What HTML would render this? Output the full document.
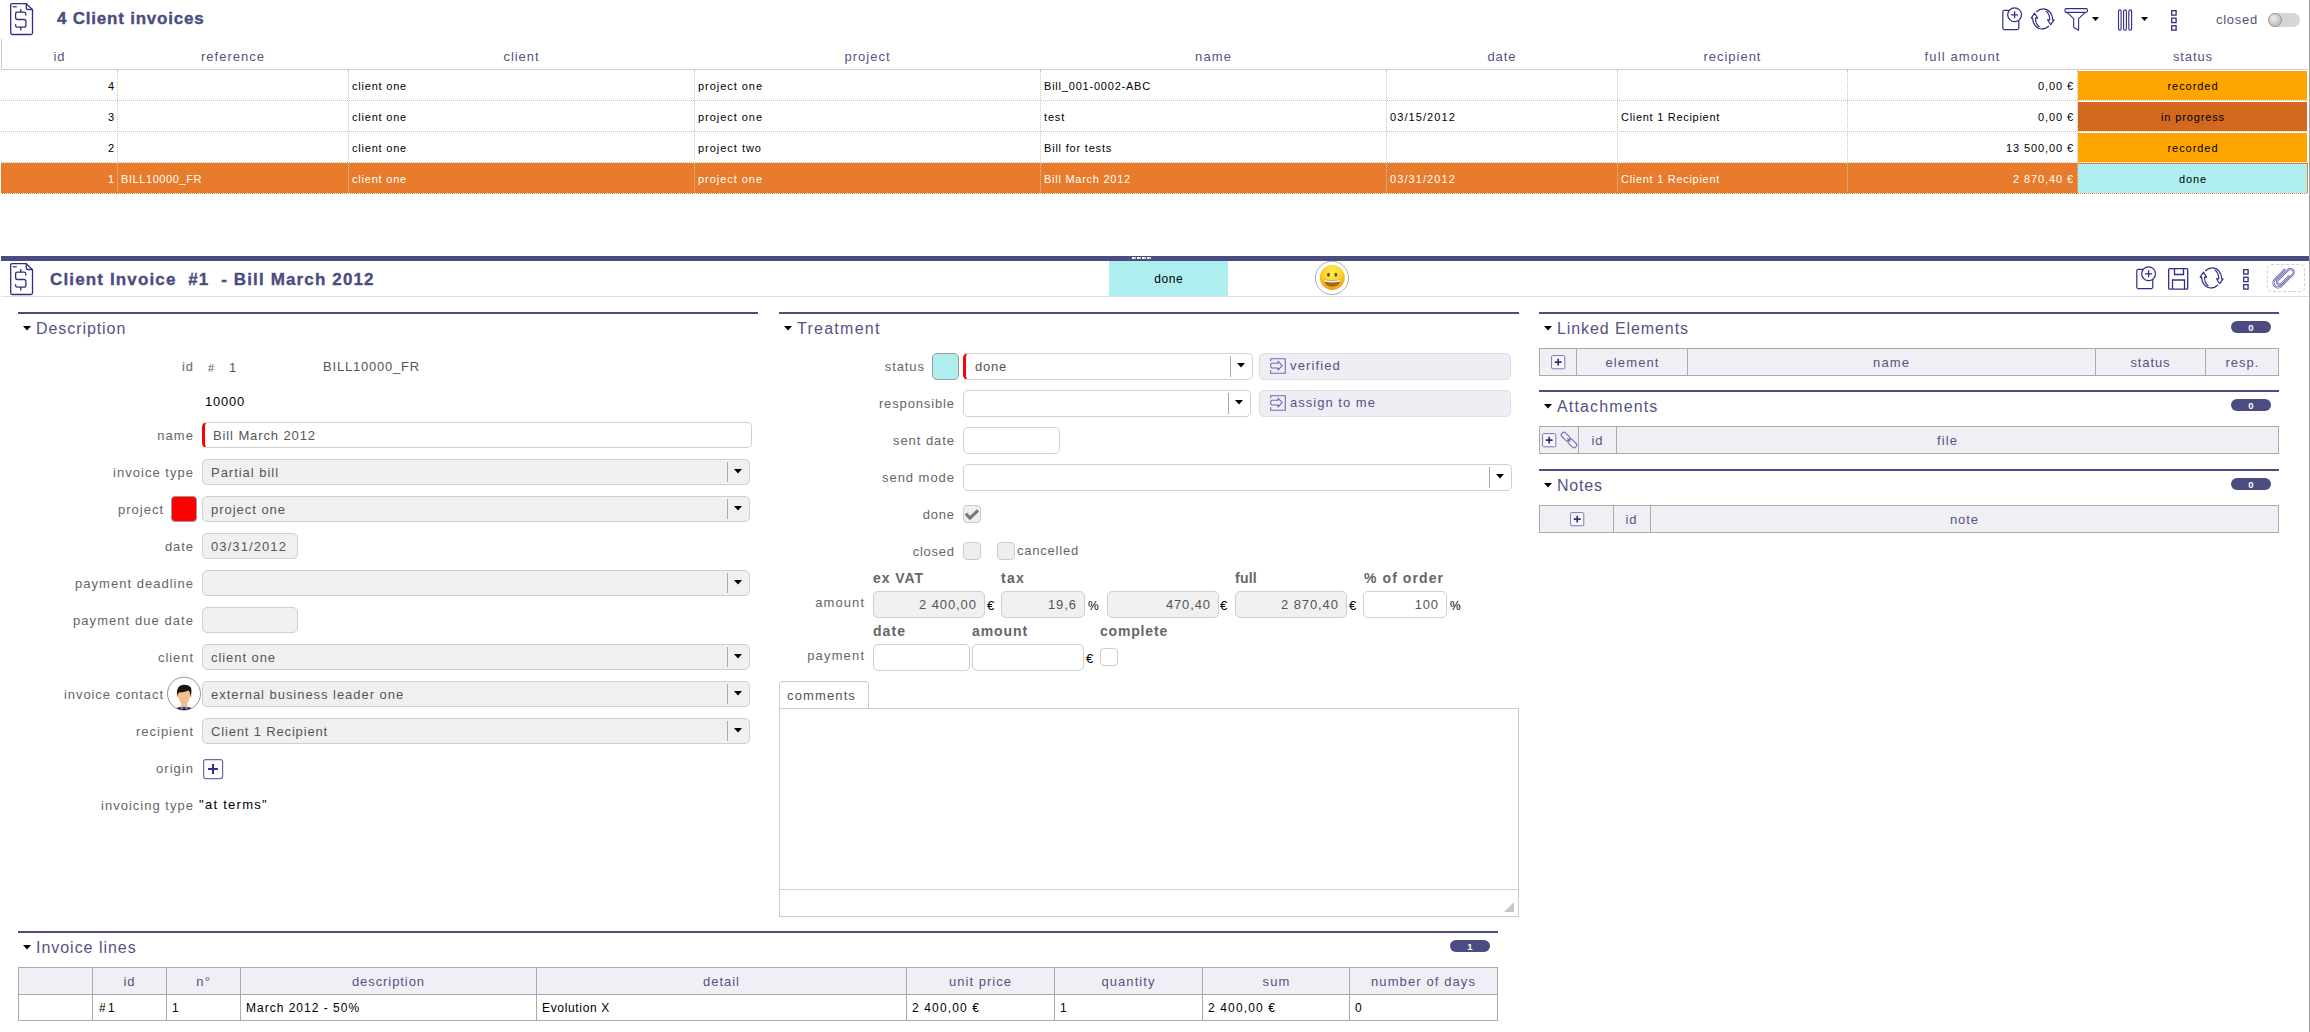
<!DOCTYPE html><html><head><meta charset="utf-8"><style>
html,body{margin:0;padding:0;background:#fff;width:2310px;height:1032px;overflow:hidden;position:relative;font-family:"Liberation Sans", sans-serif;}
.t{position:absolute;line-height:1;white-space:pre;}
.r{position:absolute;box-sizing:border-box;}
svg{position:absolute;overflow:visible;}
</style></head><body>
<svg style="left:10px;top:3px" width="24" height="33" viewBox="0 0 24 33">
<path d="M16.3 0.7 H2.2 Q0.7 0.7 0.7 2.2 V30 Q0.7 31.5 2.2 31.5 H21 Q22.5 31.5 22.5 30 V6.6 Z" fill="none" stroke="#2e2e86" stroke-width="1.3" stroke-linejoin="round"/>
<path d="M16.3 0.7 V5 Q16.3 6.5 17.8 6.5 H22.5" fill="none" stroke="#2e2e86" stroke-width="1.3"/>
<path d="M2.6 3.8 H6.8" stroke="#2e2e86" stroke-width="1.2"/>
<path d="M15.8 12.4 V11 Q15.8 9.2 14 9.2 H7.5 Q5.6 9.2 5.6 11 V14.6 Q5.6 16.5 7.5 16.5 H14 Q15.9 16.5 15.9 18.4 V22.2 Q15.9 24.1 14 24.1 H7.5 Q5.6 24.1 5.6 22.4 V21.3" fill="none" stroke="#2e2e86" stroke-width="1.3"/>
<path d="M10.8 5.9 V9.2 M10.8 24.1 V27.5" stroke="#2e2e86" stroke-width="1.3"/>
</svg>
<div class="t" style="top:9.6px;font-size:17px;color:#4b4c80;letter-spacing:0.78px;font-weight:700;left:57px;-webkit-text-stroke:0.35px #4b4c80;">4 Client invoices</div>
<svg style="left:2002px;top:7px" width="22" height="24" viewBox="0 0 22 24">
<path d="M7.6 3.3 H2.3 Q0.8 3.3 0.8 4.8 V21.1 Q0.8 22.6 2.3 22.6 H15.3 Q16.8 22.6 16.8 21.1 V13.3" fill="none" stroke="#2e2e86" stroke-width="1.2"/>
<circle cx="12.6" cy="7.8" r="6.9" fill="none" stroke="#2e2e86" stroke-width="1.2"/>
<path d="M12.6 4.3 V11.3 M9.1 7.8 H16.1" stroke="#2e2e86" stroke-width="1.3"/>
</svg>
<svg style="left:2026px;top:4px" width="33" height="31" viewBox="0 0 33 31">
<path d="M10.2 7.9 C12.7 5.7 14.7 4.9 17.2 4.9" fill="none" stroke="#2e2e86" stroke-width="1.3"/>
<path d="M17.2 4.9 C22.2 4.9 26.6 9.4 26.6 15.8 L28.1 15.8 L24.7 20.7 L21.5 15.8 L23.7 15.8 C23.7 11.4 22.2 8.4 19.7 6.9" fill="none" stroke="#2e2e86" stroke-width="1.15" stroke-linejoin="round"/>
<path d="M23 22 C20.5 24.2 18.5 25 16 25" fill="none" stroke="#2e2e86" stroke-width="1.3"/>
<path d="M16 25 C11 25 6.6 20.5 6.6 14.1 L5.1 14.1 L8.5 9.2 L11.7 14.1 L9.5 14.1 C9.5 18.5 11 21.5 13.5 23" fill="none" stroke="#2e2e86" stroke-width="1.15" stroke-linejoin="round"/>
</svg>
<svg style="left:2064px;top:8px" width="36" height="24" viewBox="0 0 36 24">
<path d="M2 0.6 H22 Q23.6 0.6 23.6 2.5 Q23.6 4.4 22 4.4 H2 Q1 4.4 1 3.4 V1.6 Q1 0.6 2 0.6 Z" fill="none" stroke="#2e2e86" stroke-width="1.1"/>
<path d="M3.3 4.6 L9.7 10.6 V19.6 L14.6 22.2 V10.6 L21.3 4.4" fill="none" stroke="#2e2e86" stroke-width="1.1" stroke-linejoin="round"/>
<path d="M28 9.1 H35 L31.5 12.9 Z" fill="#000"/>
</svg>
<svg style="left:2117px;top:9px" width="34" height="24" viewBox="0 0 34 24">
<rect x="1.5" y="0.9" width="2.6" height="20.2" rx="1.3" fill="none" stroke="#2e2e86" stroke-width="1.1"/>
<rect x="6.6" y="0.9" width="2.8" height="20.2" rx="1.4" fill="none" stroke="#2e2e86" stroke-width="1.1"/>
<rect x="11.8" y="0.9" width="2.8" height="20.2" rx="1.4" fill="none" stroke="#2e2e86" stroke-width="1.1"/>
<path d="M24 7.9 H31 L27.5 11.9 Z" fill="#000"/>
</svg>
<svg style="left:2171px;top:10px" width="8" height="22" viewBox="0 0 8 22">
<rect x="0.7" y="0.7" width="4.4" height="4.4" fill="none" stroke="#2e2e86" stroke-width="1.3"/>
<rect x="0.7" y="8.2" width="4.4" height="4.4" fill="none" stroke="#2e2e86" stroke-width="1.3"/>
<rect x="0.7" y="15.7" width="4.4" height="4.4" fill="none" stroke="#2e2e86" stroke-width="1.3"/>
</svg>
<div class="t" style="top:13.0px;font-size:13px;color:#545381;letter-spacing:0.74px;left:2216px;">closed</div>
<div class="r" style="left:2268px;top:13px;width:32px;height:14px;background:#d6d6d6;border-radius:7px;"></div>
<div class="r" style="left:2268px;top:13px;width:14px;height:14px;background:radial-gradient(circle at 40% 35%,#eee,#aaa);border-radius:7px;border:1px solid #999;"></div>
<div class="r" style="left:2309px;top:0px;width:1px;height:1032px;background:#a0a0a0;"></div>
<div class="r" style="left:1px;top:39px;width:1px;height:30px;background:#ccc;"></div>
<div class="r" style="left:1px;top:69px;width:2307px;height:1px;background:#cfcfcf;"></div>
<div class="t" style="top:50.0px;font-size:13px;color:#545381;letter-spacing:0.94px;left:1.47px;width:116px;text-align:center;">id</div>
<div class="t" style="top:50.0px;font-size:13px;color:#545381;letter-spacing:1.01px;left:117.50px;width:231px;text-align:center;">reference</div>
<div class="t" style="top:50.0px;font-size:13px;color:#545381;letter-spacing:0.94px;left:348.47px;width:346px;text-align:center;">client</div>
<div class="t" style="top:50.0px;font-size:13px;color:#545381;letter-spacing:1.00px;left:694.50px;width:346px;text-align:center;">project</div>
<div class="t" style="top:50.0px;font-size:13px;color:#545381;letter-spacing:1.12px;left:1040.56px;width:346px;text-align:center;">name</div>
<div class="t" style="top:50.0px;font-size:13px;color:#545381;letter-spacing:0.92px;left:1386.46px;width:231px;text-align:center;">date</div>
<div class="t" style="top:50.0px;font-size:13px;color:#545381;letter-spacing:0.98px;left:1617.49px;width:230px;text-align:center;">recipient</div>
<div class="t" style="top:50.0px;font-size:13px;color:#545381;letter-spacing:1.13px;left:1847.56px;width:230px;text-align:center;">full amount</div>
<div class="t" style="top:50.0px;font-size:13px;color:#545381;letter-spacing:0.89px;left:2077.44px;width:231px;text-align:center;">status</div>
<div class="r" style="left:1px;top:100px;width:2307px;height:1px;border-top:1px dotted #cdc6ad;"></div>
<div class="r" style="left:2078px;top:71px;width:229px;height:29px;background:#FFA500;"></div>
<div class="t" style="top:80.7px;font-size:11px;color:#000;letter-spacing:0.88px;right:2195.12px;">4</div>
<div class="t" style="top:80.7px;font-size:11px;color:#000;letter-spacing:0.79px;left:352px;">client one</div>
<div class="t" style="top:80.7px;font-size:11px;color:#000;letter-spacing:0.96px;left:698px;">project one</div>
<div class="t" style="top:80.7px;font-size:11px;color:#000;letter-spacing:0.79px;left:1044px;">Bill_001-0002-ABC</div>
<div class="t" style="top:80.7px;font-size:11px;color:#000;letter-spacing:0.90px;right:236.10px;">0,00 €</div>
<div class="t" style="top:80.7px;font-size:11px;color:#000;letter-spacing:0.95px;left:2078.97px;width:228px;text-align:center;">recorded</div>
<div class="r" style="left:1px;top:131px;width:2307px;height:1px;border-top:1px dotted #cdc6ad;"></div>
<div class="r" style="left:2078px;top:102px;width:229px;height:29px;background:#D2691E;"></div>
<div class="t" style="top:111.7px;font-size:11px;color:#000;letter-spacing:0.88px;right:2195.12px;">3</div>
<div class="t" style="top:111.7px;font-size:11px;color:#000;letter-spacing:0.79px;left:352px;">client one</div>
<div class="t" style="top:111.7px;font-size:11px;color:#000;letter-spacing:0.96px;left:698px;">project one</div>
<div class="t" style="top:111.7px;font-size:11px;color:#000;letter-spacing:0.82px;left:1044px;">test</div>
<div class="t" style="top:111.7px;font-size:11px;color:#000;letter-spacing:1.09px;left:1390px;">03/15/2012</div>
<div class="t" style="top:111.7px;font-size:11px;color:#000;letter-spacing:0.71px;left:1621px;">Client 1 Recipient</div>
<div class="t" style="top:111.7px;font-size:11px;color:#000;letter-spacing:0.90px;right:236.10px;">0,00 €</div>
<div class="t" style="top:111.7px;font-size:11px;color:#000;letter-spacing:0.87px;left:2078.94px;width:228px;text-align:center;">in progress</div>
<div class="r" style="left:1px;top:162px;width:2307px;height:1px;border-top:1px dotted #cdc6ad;"></div>
<div class="r" style="left:2078px;top:133px;width:229px;height:29px;background:#FFA500;"></div>
<div class="t" style="top:142.7px;font-size:11px;color:#000;letter-spacing:0.88px;right:2195.12px;">2</div>
<div class="t" style="top:142.7px;font-size:11px;color:#000;letter-spacing:0.79px;left:352px;">client one</div>
<div class="t" style="top:142.7px;font-size:11px;color:#000;letter-spacing:0.98px;left:698px;">project two</div>
<div class="t" style="top:142.7px;font-size:11px;color:#000;letter-spacing:0.80px;left:1044px;">Bill for tests</div>
<div class="t" style="top:142.7px;font-size:11px;color:#000;letter-spacing:0.90px;right:236.10px;">13 500,00 €</div>
<div class="t" style="top:142.7px;font-size:11px;color:#000;letter-spacing:0.95px;left:2078.97px;width:228px;text-align:center;">recorded</div>
<div class="r" style="left:1px;top:163px;width:2307px;height:31px;background:#E87B2C;"></div>
<div class="r" style="left:1px;top:193px;width:2307px;height:1px;border-top:1px dotted #fff;"></div>
<div class="r" style="left:2078px;top:164px;width:229px;height:29px;background:#AFEEEE;"></div>
<div class="t" style="top:173.7px;font-size:11px;color:#fff;letter-spacing:0.88px;right:2195.12px;">1</div>
<div class="t" style="top:173.7px;font-size:11px;color:#fff;letter-spacing:0.58px;left:121px;">BILL10000_FR</div>
<div class="t" style="top:173.7px;font-size:11px;color:#fff;letter-spacing:0.79px;left:352px;">client one</div>
<div class="t" style="top:173.7px;font-size:11px;color:#fff;letter-spacing:0.96px;left:698px;">project one</div>
<div class="t" style="top:173.7px;font-size:11px;color:#fff;letter-spacing:0.74px;left:1044px;">Bill March 2012</div>
<div class="t" style="top:173.7px;font-size:11px;color:#fff;letter-spacing:1.09px;left:1390px;">03/31/2012</div>
<div class="t" style="top:173.7px;font-size:11px;color:#fff;letter-spacing:0.71px;left:1621px;">Client 1 Recipient</div>
<div class="t" style="top:173.7px;font-size:11px;color:#fff;letter-spacing:0.90px;right:236.10px;">2 870,40 €</div>
<div class="t" style="top:173.7px;font-size:11px;color:#000;letter-spacing:0.88px;left:2078.94px;width:228px;text-align:center;">done</div>
<div class="r" style="left:117px;top:70px;width:1px;height:124px;border-left:1px dotted #cdc6ad;"></div>
<div class="r" style="left:348px;top:70px;width:1px;height:124px;border-left:1px dotted #cdc6ad;"></div>
<div class="r" style="left:694px;top:70px;width:1px;height:124px;border-left:1px dotted #cdc6ad;"></div>
<div class="r" style="left:1040px;top:70px;width:1px;height:124px;border-left:1px dotted #cdc6ad;"></div>
<div class="r" style="left:1386px;top:70px;width:1px;height:124px;border-left:1px dotted #cdc6ad;"></div>
<div class="r" style="left:1617px;top:70px;width:1px;height:124px;border-left:1px dotted #cdc6ad;"></div>
<div class="r" style="left:1847px;top:70px;width:1px;height:124px;border-left:1px dotted #cdc6ad;"></div>
<div class="r" style="left:2077px;top:70px;width:1px;height:124px;border-left:1px dotted #cdc6ad;"></div>
<div class="r" style="left:1px;top:256px;width:2308px;height:5px;background:#4b4c80;"></div>
<div class="r" style="left:1132px;top:257px;width:2px;height:2px;background:#fff;"></div>
<div class="r" style="left:1134px;top:257px;width:2px;height:2px;background:#cfcfc4;"></div>
<div class="r" style="left:1137px;top:257px;width:2px;height:2px;background:#fff;"></div>
<div class="r" style="left:1139px;top:257px;width:2px;height:2px;background:#cfcfc4;"></div>
<div class="r" style="left:1142px;top:257px;width:2px;height:2px;background:#fff;"></div>
<div class="r" style="left:1144px;top:257px;width:2px;height:2px;background:#cfcfc4;"></div>
<div class="r" style="left:1147px;top:257px;width:2px;height:2px;background:#fff;"></div>
<div class="r" style="left:1149px;top:257px;width:2px;height:2px;background:#cfcfc4;"></div>
<svg style="left:10px;top:263px" width="24" height="33" viewBox="0 0 24 33">
<path d="M16.3 0.7 H2.2 Q0.7 0.7 0.7 2.2 V30 Q0.7 31.5 2.2 31.5 H21 Q22.5 31.5 22.5 30 V6.6 Z" fill="none" stroke="#2e2e86" stroke-width="1.3" stroke-linejoin="round"/>
<path d="M16.3 0.7 V5 Q16.3 6.5 17.8 6.5 H22.5" fill="none" stroke="#2e2e86" stroke-width="1.3"/>
<path d="M2.6 3.8 H6.8" stroke="#2e2e86" stroke-width="1.2"/>
<path d="M15.8 12.4 V11 Q15.8 9.2 14 9.2 H7.5 Q5.6 9.2 5.6 11 V14.6 Q5.6 16.5 7.5 16.5 H14 Q15.9 16.5 15.9 18.4 V22.2 Q15.9 24.1 14 24.1 H7.5 Q5.6 24.1 5.6 22.4 V21.3" fill="none" stroke="#2e2e86" stroke-width="1.3"/>
<path d="M10.8 5.9 V9.2 M10.8 24.1 V27.5" stroke="#2e2e86" stroke-width="1.3"/>
</svg>
<div class="t" style="top:270.6px;font-size:17px;color:#4b4c80;letter-spacing:1.14px;font-weight:700;left:50px;-webkit-text-stroke:0.35px #4b4c80;">Client Invoice  #1  - Bill March 2012</div>
<div class="r" style="left:1109px;top:261px;width:119px;height:35px;background:#AFEEEE;"></div>
<div class="t" style="top:272.8px;font-size:12px;color:#000;letter-spacing:0.57px;left:1109.29px;width:119px;text-align:center;">done</div>
<svg style="left:1310px;top:258px" width="44" height="40" viewBox="0 0 44 40">
<circle cx="22" cy="19.9" r="16.6" fill="#fff" stroke="#aaa" stroke-width="1"/>
<defs><radialGradient id="eg" cx="50%" cy="30%" r="70%"><stop offset="0" stop-color="#fff35a"/><stop offset="0.55" stop-color="#fcd22a"/><stop offset="1" stop-color="#f39a0c"/></radialGradient></defs>
<circle cx="22.3" cy="19.5" r="12.5" fill="url(#eg)"/>
<ellipse cx="18.5" cy="16.7" rx="1.5" ry="2" fill="#7a4a10"/>
<ellipse cx="25.9" cy="16.7" rx="1.5" ry="2" fill="#7a4a10"/>
<path d="M14 21.5 Q22.3 23.3 30.8 21.5 Q29.8 28.8 22.3 28.8 Q15 28.8 14 21.5 Z" fill="#a8650e"/>
<path d="M14.3 21.8 Q22.3 23.6 30.5 21.8 L30.1 23.8 Q22.3 25.3 14.7 23.8 Z" fill="#eef2f4"/>
</svg>
<svg style="left:2136px;top:266px" width="22" height="24" viewBox="0 0 22 24">
<path d="M7.6 3.3 H2.3 Q0.8 3.3 0.8 4.8 V21.1 Q0.8 22.6 2.3 22.6 H15.3 Q16.8 22.6 16.8 21.1 V13.3" fill="none" stroke="#2e2e86" stroke-width="1.2"/>
<circle cx="12.6" cy="7.8" r="6.9" fill="none" stroke="#2e2e86" stroke-width="1.2"/>
<path d="M12.6 4.3 V11.3 M9.1 7.8 H16.1" stroke="#2e2e86" stroke-width="1.3"/>
</svg>
<svg style="left:2168px;top:268px" width="21" height="22" viewBox="0 0 21 22">
<rect x="0.7" y="0.7" width="19" height="20.5" rx="1" fill="none" stroke="#2e2e86" stroke-width="1.3"/>
<path d="M6.5 0.7 V6.5 H15.5 V0.7" fill="none" stroke="#2e2e86" stroke-width="1.3"/>
<path d="M4.5 21 V12 H16.5 V21" fill="none" stroke="#2e2e86" stroke-width="1.3"/>
</svg>
<svg style="left:2195px;top:263px" width="33" height="31" viewBox="0 0 33 31">
<path d="M10.2 7.9 C12.7 5.7 14.7 4.9 17.2 4.9" fill="none" stroke="#2e2e86" stroke-width="1.3"/>
<path d="M17.2 4.9 C22.2 4.9 26.6 9.4 26.6 15.8 L28.1 15.8 L24.7 20.7 L21.5 15.8 L23.7 15.8 C23.7 11.4 22.2 8.4 19.7 6.9" fill="none" stroke="#2e2e86" stroke-width="1.15" stroke-linejoin="round"/>
<path d="M23 22 C20.5 24.2 18.5 25 16 25" fill="none" stroke="#2e2e86" stroke-width="1.3"/>
<path d="M16 25 C11 25 6.6 20.5 6.6 14.1 L5.1 14.1 L8.5 9.2 L11.7 14.1 L9.5 14.1 C9.5 18.5 11 21.5 13.5 23" fill="none" stroke="#2e2e86" stroke-width="1.15" stroke-linejoin="round"/>
</svg>
<svg style="left:2243px;top:269px" width="8" height="22" viewBox="0 0 8 22">
<rect x="0.7" y="0.7" width="4.4" height="4.4" fill="none" stroke="#2e2e86" stroke-width="1.3"/>
<rect x="0.7" y="8.2" width="4.4" height="4.4" fill="none" stroke="#2e2e86" stroke-width="1.3"/>
<rect x="0.7" y="15.7" width="4.4" height="4.4" fill="none" stroke="#2e2e86" stroke-width="1.3"/>
</svg>
<svg style="left:2265px;top:262px" width="42" height="32" viewBox="0 0 42 32">
<rect x="2.3" y="2.5" width="37.2" height="27" rx="4" fill="none" stroke="#cfcfcf" stroke-width="1" stroke-dasharray="3 2"/>
<path d="M20.15 7.28 L9.69 17.75 A4.55 4.55 0 0 0 16.12 24.18 L27.75 12.55 A3.3 3.3 0 0 0 23.09 7.89 L12.69 18.29 A2.55 2.55 0 0 0 16.29 21.89 L24.54 13.65" fill="none" stroke="#5c5ca8" stroke-width="2.1"/>
<path d="M20.15 7.28 L9.69 17.75 A4.55 4.55 0 0 0 16.12 24.18 L27.75 12.55 A3.3 3.3 0 0 0 23.09 7.89 L12.69 18.29 A2.55 2.55 0 0 0 16.29 21.89 L24.54 13.65" fill="none" stroke="#fff" stroke-width="0.7"/>
</svg>
<div class="r" style="left:1px;top:296px;width:2308px;height:1px;background:#dcdcec;"></div>
<div class="r" style="left:18px;top:312px;width:740px;height:2px;background:#4b4c80;"></div>
<svg style="left:23px;top:326px" width="8" height="5" viewBox="0 0 8 5"><path d="M0 0 H8 L4 4.5 Z" fill="#000"/></svg>
<div class="t" style="top:320.5px;font-size:16px;color:#545381;letter-spacing:0.93px;left:36px;">Description</div>
<div class="r" style="left:779px;top:312px;width:740px;height:2px;background:#4b4c80;"></div>
<svg style="left:784px;top:326px" width="8" height="5" viewBox="0 0 8 5"><path d="M0 0 H8 L4 4.5 Z" fill="#000"/></svg>
<div class="t" style="top:320.5px;font-size:16px;color:#545381;letter-spacing:1.26px;left:797px;">Treatment</div>
<div class="r" style="left:1539px;top:312px;width:740px;height:2px;background:#4b4c80;"></div>
<svg style="left:1544px;top:326px" width="8" height="5" viewBox="0 0 8 5"><path d="M0 0 H8 L4 4.5 Z" fill="#000"/></svg>
<div class="t" style="top:320.5px;font-size:16px;color:#545381;letter-spacing:0.91px;left:1557px;">Linked Elements</div>
<div class="r" style="left:2231px;top:321px;width:40px;height:12px;background:#4b4c80;border-radius:6px;"></div>
<div class="t" style="top:322.5px;font-size:9.5px;color:#fff;letter-spacing:0.00px;font-weight:700;left:2231.00px;width:40px;text-align:center;">0</div>
<div class="r" style="left:1539px;top:390px;width:740px;height:2px;background:#4b4c80;"></div>
<svg style="left:1544px;top:404px" width="8" height="5" viewBox="0 0 8 5"><path d="M0 0 H8 L4 4.5 Z" fill="#000"/></svg>
<div class="t" style="top:398.5px;font-size:16px;color:#545381;letter-spacing:1.14px;left:1557px;">Attachments</div>
<div class="r" style="left:2231px;top:399px;width:40px;height:12px;background:#4b4c80;border-radius:6px;"></div>
<div class="t" style="top:400.5px;font-size:9.5px;color:#fff;letter-spacing:0.00px;font-weight:700;left:2231.00px;width:40px;text-align:center;">0</div>
<div class="r" style="left:1539px;top:469px;width:740px;height:2px;background:#4b4c80;"></div>
<svg style="left:1544px;top:483px" width="8" height="5" viewBox="0 0 8 5"><path d="M0 0 H8 L4 4.5 Z" fill="#000"/></svg>
<div class="t" style="top:477.5px;font-size:16px;color:#545381;letter-spacing:0.81px;left:1557px;">Notes</div>
<div class="r" style="left:2231px;top:478px;width:40px;height:12px;background:#4b4c80;border-radius:6px;"></div>
<div class="t" style="top:479.5px;font-size:9.5px;color:#fff;letter-spacing:0.00px;font-weight:700;left:2231.00px;width:40px;text-align:center;">0</div>
<div class="r" style="left:18px;top:931px;width:1480px;height:2px;background:#4b4c80;"></div>
<svg style="left:23px;top:945px" width="8" height="5" viewBox="0 0 8 5"><path d="M0 0 H8 L4 4.5 Z" fill="#000"/></svg>
<div class="t" style="top:939.5px;font-size:16px;color:#545381;letter-spacing:0.97px;left:36px;">Invoice lines</div>
<div class="r" style="left:1450px;top:940px;width:40px;height:12px;background:#4b4c80;border-radius:6px;"></div>
<div class="t" style="top:941.5px;font-size:9.5px;color:#fff;letter-spacing:0.00px;font-weight:700;left:1450.00px;width:40px;text-align:center;">1</div>
<div class="t" style="top:360.0px;font-size:13px;color:#666666;letter-spacing:0.94px;right:2116.06px;">id</div>
<div class="t" style="top:362.7px;font-size:11px;color:#555;letter-spacing:0.00px;left:208px;">#</div>
<div class="t" style="top:361.0px;font-size:13px;color:#555;letter-spacing:0.77px;left:229px;">1</div>
<div class="t" style="top:360.0px;font-size:13px;color:#555;letter-spacing:0.80px;left:323px;">BILL10000_FR</div>
<div class="t" style="top:395.0px;font-size:13px;color:#000;letter-spacing:0.77px;left:205px;">10000</div>
<div class="t" style="top:429.0px;font-size:13px;color:#666666;letter-spacing:1.12px;right:2115.88px;">name</div>
<div class="r" style="left:202px;top:422px;width:550px;height:26px;background:#fff;border:1px solid #cfcfcf;border-radius:5px;border-left:3px solid #f00;"></div>
<div class="t" style="top:429.0px;font-size:13px;color:#555;letter-spacing:0.89px;left:213px;">Bill March 2012</div>
<div class="t" style="top:466.0px;font-size:13px;color:#666666;letter-spacing:1.03px;right:2115.97px;">invoice type</div>
<div class="r" style="left:202px;top:459px;width:548px;height:26px;background:#f0f0f0;border:1px solid #cfcfcf;border-radius:5px;"></div>
<div class="t" style="top:466.0px;font-size:13px;color:#555;letter-spacing:0.97px;left:211px;">Partial bill</div>
<div class="r" style="left:727px;top:462px;width:1px;height:20px;background:#aaa;"></div>
<svg style="left:734px;top:469px" width="8" height="5" viewBox="0 0 8 5"><path d="M0 0 H8 L4 4.5 Z" fill="#000"/></svg>
<div class="t" style="top:503.0px;font-size:13px;color:#666666;letter-spacing:1.00px;right:2146.00px;">project</div>
<div class="r" style="left:171px;top:496px;width:26px;height:26px;background:#f00;border:1px solid #999;border-radius:4px;"></div>
<div class="r" style="left:202px;top:496px;width:548px;height:26px;background:#f0f0f0;border:1px solid #cfcfcf;border-radius:5px;"></div>
<div class="t" style="top:503.0px;font-size:13px;color:#555;letter-spacing:0.97px;left:211px;">project one</div>
<div class="r" style="left:727px;top:499px;width:1px;height:20px;background:#aaa;"></div>
<svg style="left:734px;top:506px" width="8" height="5" viewBox="0 0 8 5"><path d="M0 0 H8 L4 4.5 Z" fill="#000"/></svg>
<div class="t" style="top:540.0px;font-size:13px;color:#666666;letter-spacing:0.92px;right:2116.08px;">date</div>
<div class="r" style="left:202px;top:533px;width:96px;height:26px;background:#f0f0f0;border:1px solid #cfcfcf;border-radius:5px;"></div>
<div class="t" style="top:540.0px;font-size:13px;color:#555;letter-spacing:1.09px;left:211px;">03/31/2012</div>
<div class="t" style="top:577.0px;font-size:13px;color:#666666;letter-spacing:1.02px;right:2115.98px;">payment deadline</div>
<div class="r" style="left:202px;top:570px;width:548px;height:26px;background:#f0f0f0;border:1px solid #cfcfcf;border-radius:5px;"></div>
<div class="r" style="left:727px;top:573px;width:1px;height:20px;background:#aaa;"></div>
<svg style="left:734px;top:580px" width="8" height="5" viewBox="0 0 8 5"><path d="M0 0 H8 L4 4.5 Z" fill="#000"/></svg>
<div class="t" style="top:614.0px;font-size:13px;color:#666666;letter-spacing:1.06px;right:2115.94px;">payment due date</div>
<div class="r" style="left:202px;top:607px;width:96px;height:26px;background:#f0f0f0;border:1px solid #cfcfcf;border-radius:5px;"></div>
<div class="t" style="top:651.0px;font-size:13px;color:#666666;letter-spacing:0.94px;right:2116.06px;">client</div>
<div class="r" style="left:202px;top:644px;width:548px;height:26px;background:#f0f0f0;border:1px solid #cfcfcf;border-radius:5px;"></div>
<div class="t" style="top:651.0px;font-size:13px;color:#555;letter-spacing:0.93px;left:211px;">client one</div>
<div class="r" style="left:727px;top:647px;width:1px;height:20px;background:#aaa;"></div>
<svg style="left:734px;top:654px" width="8" height="5" viewBox="0 0 8 5"><path d="M0 0 H8 L4 4.5 Z" fill="#000"/></svg>
<div class="t" style="top:688.0px;font-size:13px;color:#666666;letter-spacing:0.93px;right:2146.07px;">invoice contact</div>
<svg style="left:167px;top:677px" width="34" height="34" viewBox="0 0 34 34">
<defs><clipPath id="avc"><circle cx="17" cy="16.7" r="16.2"/></clipPath></defs>
<circle cx="17" cy="16.7" r="16.5" fill="#fff" stroke="#888" stroke-width="0.9"/>
<g clip-path="url(#avc)">
<path d="M6 34 Q7 30.5 17 29.5 Q27 30.5 28 34 Z" fill="#3a1030"/>
<rect x="14.2" y="26" width="6" height="4" fill="#efb98a"/>
<path d="M13.8 29.6 L17.2 31 L20.6 29.6 L20.6 32.4 L17.2 31 L13.8 32.4 Z" fill="#5ab4ea"/>
<ellipse cx="10.6" cy="18.8" rx="1.2" ry="1.8" fill="#f2be90"/>
<ellipse cx="23.6" cy="18.8" rx="1.2" ry="1.8" fill="#f2be90"/>
<path d="M10.9 13 Q10.9 27 17.1 28.5 Q23.3 27 23.3 13 Z" fill="#f2be90"/>
<path d="M10 19 Q9.5 11 12.5 9.2 Q15 7.6 18 7.8 Q24 8.2 24.5 13 Q24.6 16 23.5 19.5 Q23 14.5 21.5 13.5 Q17 15.5 12 15.5 Q11 16.5 10 19 Z" fill="#1e140c"/>
</g>
</svg>
<div class="r" style="left:202px;top:681px;width:548px;height:26px;background:#f0f0f0;border:1px solid #cfcfcf;border-radius:5px;"></div>
<div class="t" style="top:688.0px;font-size:13px;color:#555;letter-spacing:0.96px;left:211px;">external business leader one</div>
<div class="r" style="left:727px;top:684px;width:1px;height:20px;background:#aaa;"></div>
<svg style="left:734px;top:691px" width="8" height="5" viewBox="0 0 8 5"><path d="M0 0 H8 L4 4.5 Z" fill="#000"/></svg>
<div class="t" style="top:725.0px;font-size:13px;color:#666666;letter-spacing:0.98px;right:2116.02px;">recipient</div>
<div class="r" style="left:202px;top:718px;width:548px;height:26px;background:#f0f0f0;border:1px solid #cfcfcf;border-radius:5px;"></div>
<div class="t" style="top:725.0px;font-size:13px;color:#555;letter-spacing:0.84px;left:211px;">Client 1 Recipient</div>
<div class="r" style="left:727px;top:721px;width:1px;height:20px;background:#aaa;"></div>
<svg style="left:734px;top:728px" width="8" height="5" viewBox="0 0 8 5"><path d="M0 0 H8 L4 4.5 Z" fill="#000"/></svg>
<div class="t" style="top:762.0px;font-size:13px;color:#666666;letter-spacing:1.03px;right:2115.97px;">origin</div>
<svg style="left:203px;top:759px" width="21" height="21" viewBox="0 0 21 21">
<rect x="0.6" y="0.6" width="19" height="19" rx="2" fill="#fff" stroke="#6a6aa8" stroke-width="1.2"/>
<path d="M10 5.1 V14.9 M5.1 10 H14.9" stroke="#2e2e86" stroke-width="2"/>
</svg>
<div class="t" style="top:799.0px;font-size:13px;color:#666666;letter-spacing:1.02px;right:2115.98px;">invoicing type</div>
<div class="t" style="top:798.0px;font-size:13px;color:#000;letter-spacing:1.28px;left:199px;">"at terms"</div>
<div class="t" style="top:360.0px;font-size:13px;color:#666666;letter-spacing:0.89px;right:1385.11px;">status</div>
<div class="r" style="left:932px;top:353px;width:27px;height:27px;background:#AFEEEE;border:1px solid #999;border-radius:5px;"></div>
<div class="r" style="left:963px;top:353px;width:290px;height:27px;background:#fff;border:1px solid #cfcfcf;border-radius:5px;border-left:3px solid #f00;"></div>
<div class="t" style="top:360.0px;font-size:13px;color:#555;letter-spacing:0.77px;left:975px;">done</div>
<div class="r" style="left:1230px;top:356px;width:1px;height:21px;background:#aaa;"></div>
<svg style="left:1237px;top:363px" width="8" height="5" viewBox="0 0 8 5"><path d="M0 0 H8 L4 4.5 Z" fill="#000"/></svg>
<div class="r" style="left:1259px;top:353px;width:252px;height:27px;background:#efeef5;border:1px solid #dedde8;border-radius:5px;"></div>
<svg style="left:1270px;top:358px" width="17" height="16" viewBox="0 0 17 16">
<path d="M0.7 3.2 V0.7 H15.3 V15.3 H0.7 V12.2" fill="none" stroke="#6d6dae" stroke-width="1.1"/>
<path d="M1.8 5.2 H8 V3.2 L12.2 7.6 L8 12 V10 H1.8 Q0.7 10 0.7 7.6 Q0.7 5.2 1.8 5.2 Z" fill="none" stroke="#6d6dae" stroke-width="1.1" stroke-linejoin="round"/>
</svg>
<div class="t" style="top:359.0px;font-size:13px;color:#545381;letter-spacing:1.13px;left:1290px;">verified</div>
<div class="t" style="top:397.0px;font-size:13px;color:#666666;letter-spacing:0.86px;right:1355.14px;">responsible</div>
<div class="r" style="left:963px;top:390px;width:288px;height:27px;background:#fff;border:1px solid #cfcfcf;border-radius:5px;"></div>
<div class="r" style="left:1228px;top:393px;width:1px;height:21px;background:#aaa;"></div>
<svg style="left:1235px;top:400px" width="8" height="5" viewBox="0 0 8 5"><path d="M0 0 H8 L4 4.5 Z" fill="#000"/></svg>
<div class="r" style="left:1259px;top:390px;width:252px;height:27px;background:#efeef5;border:1px solid #dedde8;border-radius:5px;"></div>
<svg style="left:1270px;top:395px" width="17" height="16" viewBox="0 0 17 16">
<path d="M0.7 3.2 V0.7 H15.3 V15.3 H0.7 V12.2" fill="none" stroke="#6d6dae" stroke-width="1.1"/>
<path d="M1.8 5.2 H8 V3.2 L12.2 7.6 L8 12 V10 H1.8 Q0.7 10 0.7 7.6 Q0.7 5.2 1.8 5.2 Z" fill="none" stroke="#6d6dae" stroke-width="1.1" stroke-linejoin="round"/>
</svg>
<div class="t" style="top:396.0px;font-size:13px;color:#545381;letter-spacing:1.02px;left:1290px;">assign to me</div>
<div class="t" style="top:434.0px;font-size:13px;color:#666666;letter-spacing:0.94px;right:1355.06px;">sent date</div>
<div class="r" style="left:963px;top:427px;width:97px;height:27px;background:#fff;border:1px solid #cfcfcf;border-radius:5px;"></div>
<div class="t" style="top:471.0px;font-size:13px;color:#666666;letter-spacing:0.96px;right:1355.04px;">send mode</div>
<div class="r" style="left:963px;top:464px;width:549px;height:27px;background:#fff;border:1px solid #cfcfcf;border-radius:5px;"></div>
<div class="r" style="left:1489px;top:467px;width:1px;height:21px;background:#aaa;"></div>
<svg style="left:1496px;top:474px" width="8" height="5" viewBox="0 0 8 5"><path d="M0 0 H8 L4 4.5 Z" fill="#000"/></svg>
<div class="t" style="top:508.0px;font-size:13px;color:#666666;letter-spacing:0.77px;right:1355.23px;">done</div>
<div class="r" style="left:963px;top:505px;width:18px;height:18px;background:#eee;border:1px solid #ccc;border-radius:4px;"></div>
<svg style="left:964px;top:506px" width="16" height="16" viewBox="0 0 16 16"><path d="M1.8 7.6 L6 12 L14 4.3" fill="none" stroke="#777" stroke-width="3"/></svg>
<div class="t" style="top:545.0px;font-size:13px;color:#666666;letter-spacing:0.74px;right:1355.26px;">closed</div>
<div class="r" style="left:963px;top:542px;width:18px;height:18px;background:#eee;border:1px solid #ccc;border-radius:4px;"></div>
<div class="r" style="left:997px;top:542px;width:18px;height:18px;background:#eee;border:1px solid #ccc;border-radius:4px;"></div>
<div class="t" style="top:544.0px;font-size:13px;color:#666666;letter-spacing:0.78px;left:1017px;">cancelled</div>
<div class="t" style="top:571.1px;font-size:14px;color:#666666;letter-spacing:0.93px;font-weight:700;left:873px;">ex VAT</div>
<div class="t" style="top:571.1px;font-size:14px;color:#666666;letter-spacing:1.26px;font-weight:700;left:1001px;">tax</div>
<div class="t" style="top:571.1px;font-size:14px;color:#666666;letter-spacing:0.25px;font-weight:700;left:1235px;">full</div>
<div class="t" style="top:571.1px;font-size:14px;color:#666666;letter-spacing:1.08px;font-weight:700;left:1364px;">% of order</div>
<div class="t" style="top:596.0px;font-size:13px;color:#666666;letter-spacing:1.10px;right:1444.90px;">amount</div>
<div class="r" style="left:873px;top:591px;width:112px;height:27px;background:#f0f0f0;border:1px solid #cfcfcf;border-radius:5px;"></div>
<div class="t" style="top:598.0px;font-size:13px;color:#555;letter-spacing:0.92px;right:1333.08px;">2 400,00</div>
<div class="t" style="top:599.0px;font-size:13px;color:#000;letter-spacing:0.77px;left:987px;">€</div>
<div class="r" style="left:1001px;top:591px;width:84px;height:27px;background:#f0f0f0;border:1px solid #cfcfcf;border-radius:5px;"></div>
<div class="t" style="top:598.0px;font-size:13px;color:#555;letter-spacing:0.92px;right:1233.08px;">19,6</div>
<div class="t" style="top:599.8px;font-size:12px;color:#000;letter-spacing:0.00px;left:1088px;">%</div>
<div class="r" style="left:1107px;top:591px;width:112px;height:27px;background:#f0f0f0;border:1px solid #cfcfcf;border-radius:5px;"></div>
<div class="t" style="top:598.0px;font-size:13px;color:#555;letter-spacing:0.87px;right:1099.13px;">470,40</div>
<div class="t" style="top:599.0px;font-size:13px;color:#000;letter-spacing:0.77px;left:1220px;">€</div>
<div class="r" style="left:1235px;top:591px;width:112px;height:27px;background:#f0f0f0;border:1px solid #cfcfcf;border-radius:5px;"></div>
<div class="t" style="top:598.0px;font-size:13px;color:#555;letter-spacing:0.92px;right:971.08px;">2 870,40</div>
<div class="t" style="top:599.0px;font-size:13px;color:#000;letter-spacing:0.77px;left:1349px;">€</div>
<div class="r" style="left:1363px;top:591px;width:84px;height:27px;background:#fff;border:1px solid #cfcfcf;border-radius:5px;"></div>
<div class="t" style="top:598.0px;font-size:13px;color:#555;letter-spacing:0.77px;right:871.23px;">100</div>
<div class="t" style="top:599.8px;font-size:12px;color:#000;letter-spacing:0.00px;left:1450px;">%</div>
<div class="t" style="top:624.1px;font-size:14px;color:#666666;letter-spacing:1.05px;font-weight:700;left:873px;">date</div>
<div class="t" style="top:624.1px;font-size:14px;color:#666666;letter-spacing:0.91px;font-weight:700;left:972px;">amount</div>
<div class="t" style="top:624.1px;font-size:14px;color:#666666;letter-spacing:0.82px;font-weight:700;left:1100px;">complete</div>
<div class="t" style="top:649.0px;font-size:13px;color:#666666;letter-spacing:1.16px;right:1444.84px;">payment</div>
<div class="r" style="left:873px;top:644px;width:97px;height:27px;background:#fff;border:1px solid #cfcfcf;border-radius:5px;"></div>
<div class="r" style="left:972px;top:644px;width:112px;height:27px;background:#fff;border:1px solid #cfcfcf;border-radius:5px;"></div>
<div class="t" style="top:652.0px;font-size:13px;color:#000;letter-spacing:0.77px;left:1086px;">€</div>
<div class="r" style="left:1100px;top:648px;width:18px;height:18px;background:#fff;border:1px solid #ccc;border-radius:4px;"></div>
<div class="r" style="left:779px;top:681px;width:90px;height:28px;background:#fff;border:1px solid #ccc;border-bottom:none;border-radius:4px 4px 0 0;"></div>
<div class="t" style="top:689.0px;font-size:13px;color:#555;letter-spacing:1.13px;left:787px;">comments</div>
<div class="r" style="left:779px;top:708px;width:740px;height:209px;border:1px solid #ccc;"></div>
<div class="r" style="left:780px;top:889px;width:738px;height:1px;background:#d2d2d2;"></div>
<svg style="left:1503px;top:901px" width="12" height="12" viewBox="0 0 12 12"><path d="M11 1 V11 H1 Z" fill="#c8c8c8"/></svg>
<div class="r" style="left:1539px;top:348px;width:740px;height:28px;background:#f0eff5;border:1px solid #aaa;"></div>
<div class="r" style="left:1576px;top:348px;width:1px;height:28px;background:#aaa;"></div>
<div class="r" style="left:1687px;top:348px;width:1px;height:28px;background:#aaa;"></div>
<div class="r" style="left:2095px;top:348px;width:1px;height:28px;background:#aaa;"></div>
<div class="r" style="left:2205px;top:348px;width:1px;height:28px;background:#aaa;"></div>
<div class="t" style="top:356.0px;font-size:13px;color:#545381;letter-spacing:1.11px;left:1482.55px;width:300px;text-align:center;">element</div>
<div class="t" style="top:356.0px;font-size:13px;color:#545381;letter-spacing:1.12px;left:1741.56px;width:300px;text-align:center;">name</div>
<div class="t" style="top:356.0px;font-size:13px;color:#545381;letter-spacing:0.89px;left:2000.44px;width:300px;text-align:center;">status</div>
<div class="t" style="top:356.0px;font-size:13px;color:#545381;letter-spacing:1.02px;left:2092.51px;width:300px;text-align:center;">resp.</div>
<svg style="left:1551px;top:355px" width="15" height="15" viewBox="0 0 15 15">
<rect x="0.6" y="0.6" width="13.2" height="13.2" rx="1" fill="#f8f8fb" stroke="#7a7ab5" stroke-width="1"/>
<path d="M7.2 3.8 V10.6 M3.8 7.2 H10.6" stroke="#2e2e86" stroke-width="1.7"/>
</svg>
<div class="r" style="left:1539px;top:426px;width:740px;height:28px;background:#f0eff5;border:1px solid #aaa;"></div>
<div class="r" style="left:1578px;top:426px;width:1px;height:28px;background:#aaa;"></div>
<div class="r" style="left:1616px;top:426px;width:1px;height:28px;background:#aaa;"></div>
<div class="t" style="top:434.0px;font-size:13px;color:#545381;letter-spacing:0.94px;left:1447.47px;width:300px;text-align:center;">id</div>
<div class="t" style="top:434.0px;font-size:13px;color:#545381;letter-spacing:1.09px;left:1797.55px;width:300px;text-align:center;">file</div>
<svg style="left:1542px;top:433px" width="15" height="15" viewBox="0 0 15 15">
<rect x="0.6" y="0.6" width="13.2" height="13.2" rx="1" fill="#f8f8fb" stroke="#7a7ab5" stroke-width="1"/>
<path d="M7.2 3.8 V10.6 M3.8 7.2 H10.6" stroke="#2e2e86" stroke-width="1.7"/>
</svg>
<svg style="left:1560px;top:431px" width="18" height="18" viewBox="0 0 18 18">
<rect x="-2.6" y="-5" width="5.2" height="10" rx="2.6" transform="translate(5.6 5.6) rotate(-45)" fill="none" stroke="#7272b2" stroke-width="1.1"/>
<rect x="-2.6" y="-5" width="5.2" height="10" rx="2.6" transform="translate(12.4 12.4) rotate(-45)" fill="none" stroke="#7272b2" stroke-width="1.1"/>
<path d="M7.3 7.3 L10.7 10.7" stroke="#7272b2" stroke-width="1.1"/>
</svg>
<div class="r" style="left:1539px;top:505px;width:740px;height:28px;background:#f0eff5;border:1px solid #aaa;"></div>
<div class="r" style="left:1613px;top:505px;width:1px;height:28px;background:#aaa;"></div>
<div class="r" style="left:1650px;top:505px;width:1px;height:28px;background:#aaa;"></div>
<div class="t" style="top:513.0px;font-size:13px;color:#545381;letter-spacing:0.94px;left:1481.47px;width:300px;text-align:center;">id</div>
<div class="t" style="top:513.0px;font-size:13px;color:#545381;letter-spacing:0.92px;left:1814.46px;width:300px;text-align:center;">note</div>
<svg style="left:1570px;top:512px" width="15" height="15" viewBox="0 0 15 15">
<rect x="0.6" y="0.6" width="13.2" height="13.2" rx="1" fill="#f8f8fb" stroke="#7a7ab5" stroke-width="1"/>
<path d="M7.2 3.8 V10.6 M3.8 7.2 H10.6" stroke="#2e2e86" stroke-width="1.7"/>
</svg>
<div class="r" style="left:18px;top:967px;width:1480px;height:28px;background:#f0eff5;border:1px solid #aaa;"></div>
<div class="r" style="left:92px;top:967px;width:1px;height:28px;background:#aaa;"></div>
<div class="r" style="left:166px;top:967px;width:1px;height:28px;background:#aaa;"></div>
<div class="r" style="left:240px;top:967px;width:1px;height:28px;background:#aaa;"></div>
<div class="r" style="left:536px;top:967px;width:1px;height:28px;background:#aaa;"></div>
<div class="r" style="left:906px;top:967px;width:1px;height:28px;background:#aaa;"></div>
<div class="r" style="left:1054px;top:967px;width:1px;height:28px;background:#aaa;"></div>
<div class="r" style="left:1202px;top:967px;width:1px;height:28px;background:#aaa;"></div>
<div class="r" style="left:1349px;top:967px;width:1px;height:28px;background:#aaa;"></div>
<div class="t" style="top:975.0px;font-size:13px;color:#545381;letter-spacing:0.94px;left:-20.53px;width:300px;text-align:center;">id</div>
<div class="t" style="top:975.0px;font-size:13px;color:#545381;letter-spacing:1.28px;left:53.64px;width:300px;text-align:center;">n°</div>
<div class="t" style="top:975.0px;font-size:13px;color:#545381;letter-spacing:0.92px;left:238.46px;width:300px;text-align:center;">description</div>
<div class="t" style="top:975.0px;font-size:13px;color:#545381;letter-spacing:0.99px;left:571.49px;width:300px;text-align:center;">detail</div>
<div class="t" style="top:975.0px;font-size:13px;color:#545381;letter-spacing:1.02px;left:830.51px;width:300px;text-align:center;">unit price</div>
<div class="t" style="top:975.0px;font-size:13px;color:#545381;letter-spacing:1.06px;left:978.53px;width:300px;text-align:center;">quantity</div>
<div class="t" style="top:975.0px;font-size:13px;color:#545381;letter-spacing:1.15px;left:1126.57px;width:300px;text-align:center;">sum</div>
<div class="t" style="top:975.0px;font-size:13px;color:#545381;letter-spacing:1.10px;left:1273.55px;width:300px;text-align:center;">number of days</div>
<div class="r" style="left:18px;top:994px;width:1480px;height:27px;background:#fff;border:1px solid #aaa;"></div>
<div class="r" style="left:92px;top:994px;width:1px;height:27px;background:#aaa;"></div>
<div class="r" style="left:166px;top:994px;width:1px;height:27px;background:#aaa;"></div>
<div class="r" style="left:240px;top:994px;width:1px;height:27px;background:#aaa;"></div>
<div class="r" style="left:536px;top:994px;width:1px;height:27px;background:#aaa;"></div>
<div class="r" style="left:906px;top:994px;width:1px;height:27px;background:#aaa;"></div>
<div class="r" style="left:1054px;top:994px;width:1px;height:27px;background:#aaa;"></div>
<div class="r" style="left:1202px;top:994px;width:1px;height:27px;background:#aaa;"></div>
<div class="r" style="left:1349px;top:994px;width:1px;height:27px;background:#aaa;"></div>
<div class="t" style="top:1001.8px;font-size:12px;color:#000;letter-spacing:2.32px;left:99px;">#1</div>
<div class="t" style="top:1001.8px;font-size:12px;color:#000;letter-spacing:1.31px;left:172px;">1</div>
<div class="t" style="top:1001.8px;font-size:12px;color:#000;letter-spacing:1.00px;left:246px;">March 2012 - 50%</div>
<div class="t" style="top:1001.8px;font-size:12px;color:#000;letter-spacing:0.66px;left:542px;">Evolution X</div>
<div class="t" style="top:1001.8px;font-size:12px;color:#000;letter-spacing:1.13px;left:912px;">2 400,00 €</div>
<div class="t" style="top:1001.8px;font-size:12px;color:#000;letter-spacing:1.31px;left:1060px;">1</div>
<div class="t" style="top:1001.8px;font-size:12px;color:#000;letter-spacing:1.13px;left:1208px;">2 400,00 €</div>
<div class="t" style="top:1001.8px;font-size:12px;color:#000;letter-spacing:1.31px;left:1355px;">0</div>
</body></html>
